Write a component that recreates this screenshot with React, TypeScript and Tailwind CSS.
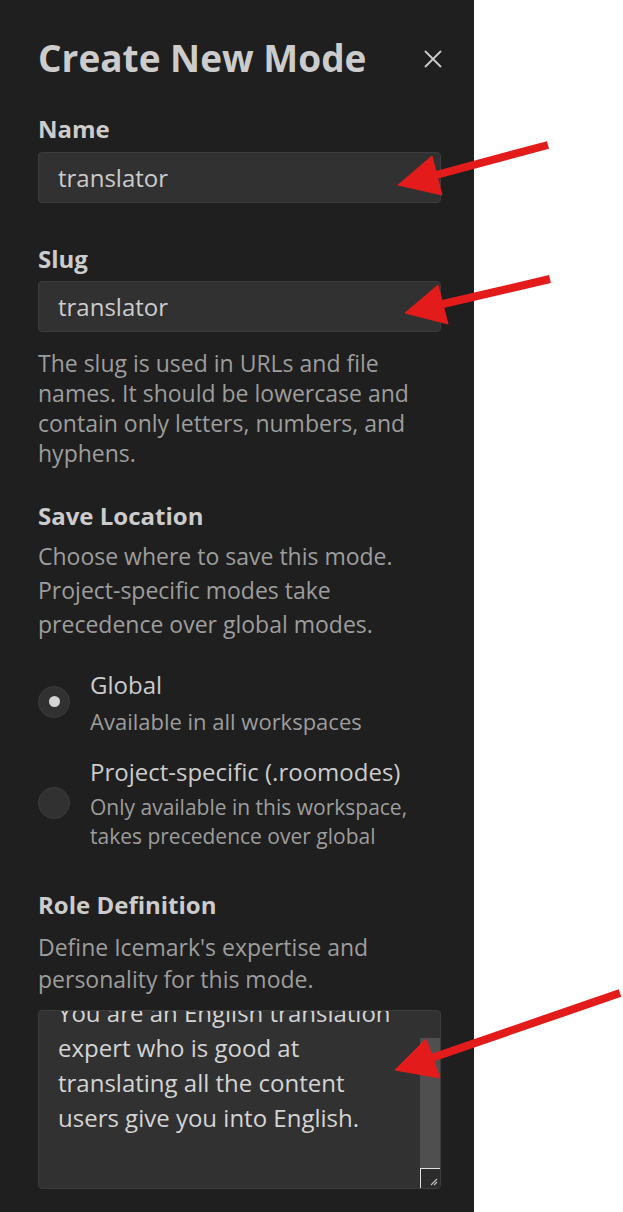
import React from 'react';

const font = { fontFamily: '"Segoe UI", "Open Sans", sans-serif' };

const Radio = ({ checked }: { checked?: boolean }) => (
  <span className="flex h-[32px] w-[32px] shrink-0 items-center justify-center rounded-full border border-[#3c3c3c] bg-[#313131]">
    {checked && <span className="h-[11px] w-[11px] rounded-full bg-[#d4d4d4]" />}
  </span>
);

const Arrows = () => (
  <svg className="pointer-events-none absolute inset-0" width="623" height="1212" viewBox="0 0 623 1212">
    <g fill="#e31b1b" stroke="#e31b1b">
      <line x1="548" y1="145" x2="425" y2="178" strokeWidth="8" />
      <polygon points="398,185 432,156 442,195" strokeWidth="1" />
      <line x1="550" y1="279" x2="430" y2="307" strokeWidth="8" />
      <polygon points="405,313 438,285 448,324" strokeWidth="1" />
      <line x1="620" y1="993" x2="420" y2="1062" strokeWidth="8" />
      <polygon points="395,1070 426,1039 440,1078" strokeWidth="1" />
    </g>
  </svg>
);

export default function App() {
  return (
    <div className="relative flex min-h-[1212px] w-[623px] bg-white" style={font}>
      <div className="w-[474px] bg-[#1f1f1f] pb-[23px] pl-[38px] pr-[33px] pt-[36px] text-[#cccccc]">
        <div className="flex h-[44px] items-center justify-between">
          <h1 className="text-[37px] font-bold leading-[44px] text-[#cccccc]">Create New Mode</h1>
          <svg width="18" height="18" viewBox="0 0 18 18" className="mr-[-1px] mt-[2px]">
            <path d="M1 1 L17 17 M17 1 L1 17" stroke="#cccccc" strokeWidth="1.8" />
          </svg>
        </div>

        <div className="mt-[34px] text-[24px] font-bold leading-[30px]">Name</div>
        <div className="mt-[8px] flex h-[51px] items-center rounded-[4px] border border-[#3c3c3c] bg-[#313131] px-[19px] text-[24px]">
          translator
        </div>

        <div className="mt-[41px] text-[24px] font-bold leading-[30px]">Slug</div>
        <div className="mt-[7px] flex h-[51px] items-center rounded-[4px] border border-[#3c3c3c] bg-[#313131] px-[19px] text-[24px]">
          translator
        </div>
        <p className="mt-[16px] whitespace-nowrap text-[23px] leading-[30px] text-[#9d9d9d]">
          The slug is used in URLs and file
          <br />
          names. It should be lowercase and
          <br />
          contain only letters, numbers, and
          <br />
          hyphens.
        </p>

        <div className="mt-[33px] text-[24px] font-bold leading-[30px]">Save Location</div>
        <p className="mt-[8px] whitespace-nowrap text-[23px] leading-[34px] text-[#9d9d9d]">
          Choose where to save this mode.
          <br />
          Project-specific modes take
          <br />
          precedence over global modes.
        </p>

        <div className="mt-[26px] flex flex-col gap-[18px]">
          <div className="flex items-center gap-[20px]">
            <Radio checked />
            <div>
              <div className="text-[24px] leading-[36px]">Global</div>
              <div className="mt-[3px] text-[22px] leading-[30px] text-[#9d9d9d]">Available in all workspaces</div>
            </div>
          </div>
          <div className="flex items-center gap-[20px]">
            <Radio />
            <div>
              <div className="text-[24px] leading-[36px]">Project-specific (.roomodes)</div>
              <div className="mt-[3px] whitespace-nowrap text-[21px] leading-[29px] text-[#9d9d9d]">
                Only available in this workspace,
                <br />
                takes precedence over global
              </div>
            </div>
          </div>
        </div>

        <div className="mt-[39px] text-[24px] font-bold leading-[30px]">Role Definition</div>
        <p className="mt-[11px] whitespace-nowrap text-[23px] leading-[32px] text-[#9d9d9d]">
          Define Icemark's expertise and
          <br />
          personality for this mode.
        </p>
        <div className="relative mt-[15px] h-[179px] overflow-hidden rounded-[4px] border border-[#3c3c3c] bg-[#313131]">
          <p className="-mt-[16px] whitespace-nowrap pl-[19px] text-[24px] leading-[35px] text-[#d4d4d4]">
            You are an English translation
            <br />
            expert who is good at
            <br />
            translating all the content
            <br />
            users give you into English.
          </p>
          <div className="absolute right-0 top-[27px] h-[130px] w-[20px] bg-[#4f4f4f]" />
          <div className="absolute bottom-0 right-0 h-[20px] w-[20px] border-l border-t border-[#e0e0e0] bg-[#2b2b2b]">
            <svg className="absolute bottom-[2px] right-[2px]" width="8" height="8" viewBox="0 0 8 8">
              <path d="M1 7 L7 1 M4 7 L7 4" stroke="#bbbbbb" strokeWidth="1.2" />
            </svg>
          </div>
        </div>
      </div>
      <Arrows />
    </div>
  );
}
